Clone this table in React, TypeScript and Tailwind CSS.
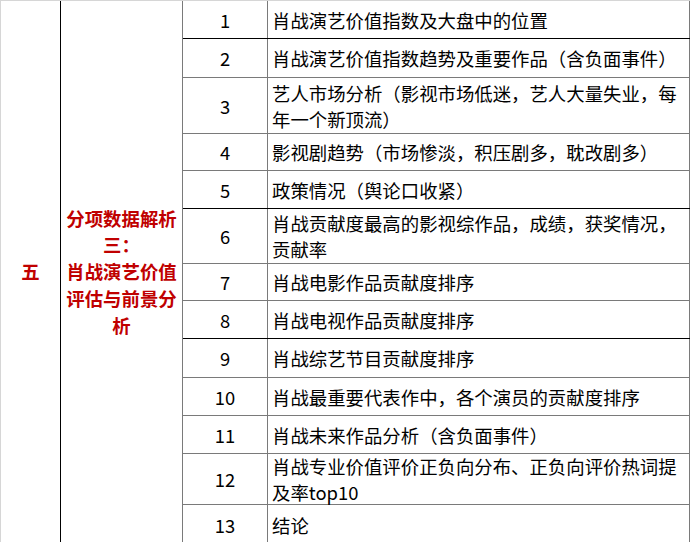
import React from "react";

type Row = { n: string; h: string; b: string; lines: string[] };

const rows: Row[] = [
  { n: "1", h: "h-[38px]", b: "border-black", lines: ["肖战演艺价值指数及大盘中的位置"] },
  { n: "2", h: "h-[39px]", b: "border-[#7a7a7a]", lines: ["肖战演艺价值指数趋势及重要作品（含负面事件）"] },
  { n: "3", h: "h-[56px]", b: "border-[#7a7a7a]", lines: ["艺人市场分析（影视市场低迷，艺人大量失业，每", "年一个新顶流）"] },
  { n: "4", h: "h-[37px]", b: "border-[#7a7a7a]", lines: ["影视剧趋势（市场惨淡，积压剧多，耽改剧多）"] },
  { n: "5", h: "h-[38px]", b: "border-black", lines: ["政策情况（舆论口收紧）"] },
  { n: "6", h: "h-[55px]", b: "border-[#7a7a7a]", lines: ["肖战贡献度最高的影视综作品，成绩，获奖情况，", "贡献率"] },
  { n: "7", h: "h-[37px]", b: "border-[#7a7a7a]", lines: ["肖战电影作品贡献度排序"] },
  { n: "8", h: "h-[38px]", b: "border-black", lines: ["肖战电视作品贡献度排序"] },
  { n: "9", h: "h-[39px]", b: "border-[#7a7a7a]", lines: ["肖战综艺节目贡献度排序"] },
  { n: "10", h: "h-[38px]", b: "border-[#7a7a7a]", lines: ["肖战最重要代表作中，各个演员的贡献度排序"] },
  { n: "11", h: "h-[38px]", b: "border-[#7a7a7a]", lines: ["肖战未来作品分析（含负面事件）"] },
  { n: "12", h: "h-[51px]", b: "border-[#7a7a7a]", lines: ["肖战专业价值评价正负向分布、正负向评价热词提", "及率top10"] },
  { n: "13", h: "h-[40px]", b: "border-transparent", lines: ["结论"] },
];

export default function App() {
  return (
    <div
      className="w-[690px] h-[542px] overflow-hidden bg-white border-t border-[#d6d6d6] flex text-black"
      style={{ fontFamily: '"Noto Sans CJK SC", "Noto Sans", sans-serif' }}
    >
      <div className="w-[61px] shrink-0 border-l border-[#d6d6d6] border-r border-r-black flex items-center justify-center">
        <span className="text-[18.4px] font-bold text-[#c00000] leading-[27px]">五</span>
      </div>
      <div className="w-[122px] shrink-0 border-r border-[#7a7a7a] flex items-center justify-center">
        <div className="text-[18.4px] font-bold text-[#c00000] leading-[26.8px] text-center">
          分项数据解析
          <br />
          三：
          <br />
          肖战演艺价值
          <br />
          评估与前景分
          <br />
          析
        </div>
      </div>
      <div className="w-[507px] shrink-0 flex flex-col">
        {rows.map((r) => (
          <div key={r.n} className={`flex shrink-0 border-b ${r.h} ${r.b}`}>
            <div className="w-[85px] shrink-0 border-r border-[#7a7a7a] flex items-center justify-center text-[18.4px] leading-[26px]">
              {r.n}
            </div>
            <div className="w-[422px] shrink-0 border-r border-[#7a7a7a] flex items-center pl-[4px] text-[18.4px] leading-[26px] whitespace-nowrap">
              <div>
                {r.lines.map((l, i) => (
                  <div key={i}>{l}</div>
                ))}
              </div>
            </div>
          </div>
        ))}
      </div>
    </div>
  );
}
